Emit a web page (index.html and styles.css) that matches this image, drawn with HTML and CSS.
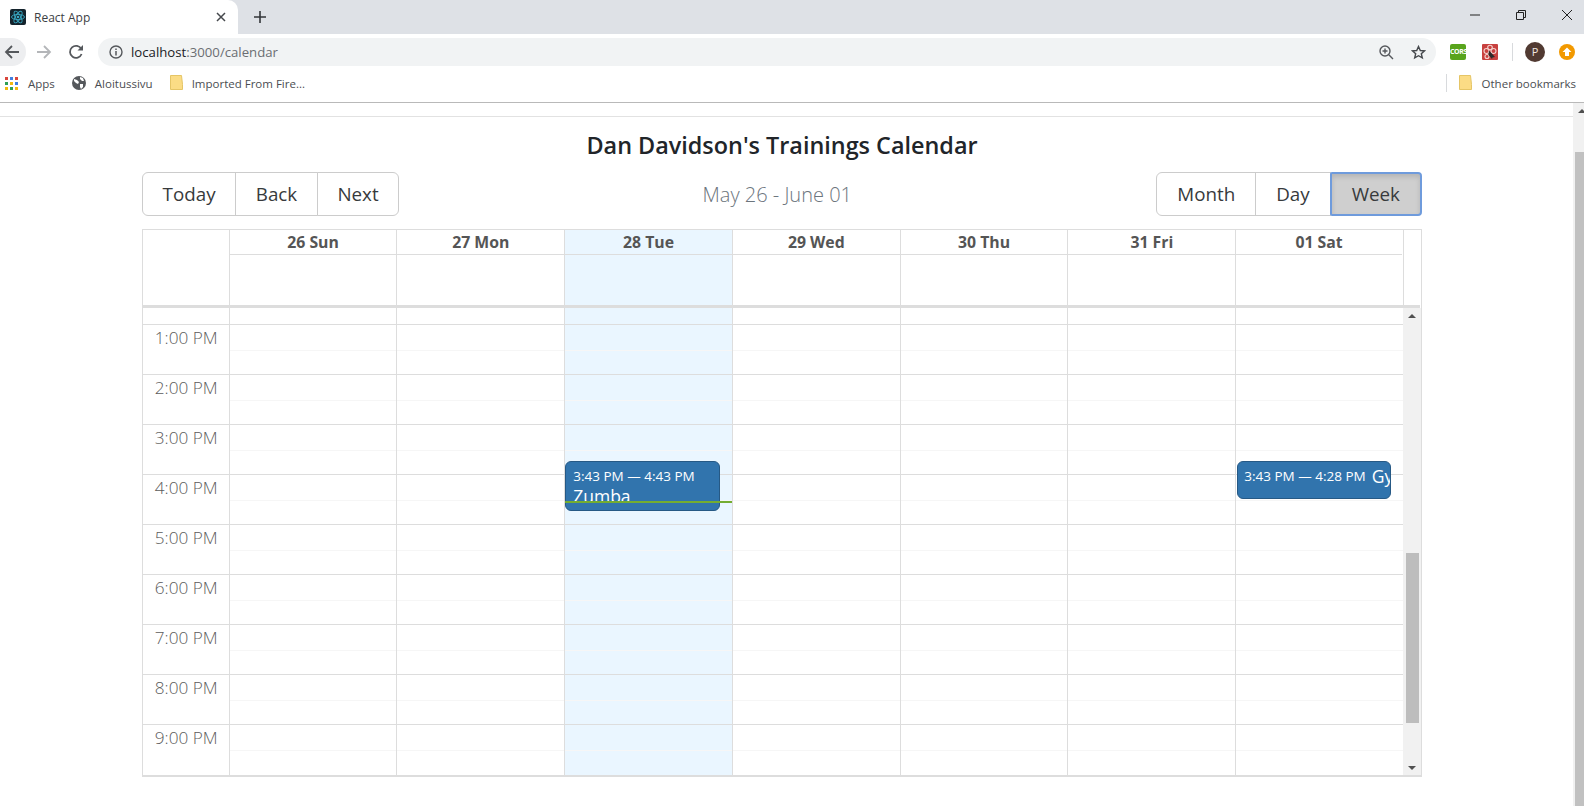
FILE: index.html
```html
<!DOCTYPE html>
<html lang="en">
<head>
    <meta charset="UTF-8">
    <title>React App</title>
    <link rel="stylesheet" href="styles.css">
</head>
<body>

<div class="tabstrip">
    <div class="tab">
        <svg class="favicon" width="16" height="16" viewBox="0 0 16 16">
            <rect width="16" height="16" rx="2" fill="#14232c"/>
            <g fill="none" stroke="#39a9c4" stroke-width="0.9">
                <ellipse cx="8" cy="8" rx="6.5" ry="2.6"/>
                <ellipse cx="8" cy="8" rx="6.5" ry="2.6" transform="rotate(60 8 8)"/>
                <ellipse cx="8" cy="8" rx="6.5" ry="2.6" transform="rotate(120 8 8)"/>
            </g>
            <circle cx="8" cy="8" r="1.3" fill="#39a9c4"/>
        </svg>
        <span class="tab-title">React App</span>
        <svg class="tab-close" width="10" height="10" viewBox="0 0 10 10">
            <path d="M1 1l8 8M9 1l-8 8" stroke="#45484c" stroke-width="1.5"/>
        </svg>
    </div>
    <svg class="new-tab" width="12" height="12" viewBox="0 0 12 12">
        <path d="M6 0v12M0 6h12" stroke="#33363a" stroke-width="1.6"/>
    </svg>
    <div class="window-btns">
        <svg width="10" height="10" viewBox="0 0 10 10"><path d="M0 5h10" stroke="#222" stroke-width="1"/></svg>
        <svg width="10" height="10" viewBox="0 0 10 10" fill="none" stroke="#222"><path d="M.5 2.5h7v7h-7zM2.5 2.5v-2h7v7h-2"/></svg>
        <svg width="10" height="10" viewBox="0 0 10 10"><path d="M0 0l10 10M10 0l-10 10" stroke="#222" stroke-width="1"/></svg>
    </div>
</div>

<div class="toolbar">
    <div class="nav-back">
        <svg width="16" height="16" viewBox="0 0 16 16" fill="none" stroke="#55585c" stroke-width="1.8"><path d="M15 8H2M8 2L2 8l6 6"/></svg>
    </div>
    <svg class="nav-fwd" width="16" height="16" viewBox="0 0 16 16" fill="none" stroke="#b4b6b9" stroke-width="1.8"><path d="M1 8h13M8 2l6 6-6 6"/></svg>
    <svg class="nav-reload" width="16" height="16" viewBox="0 0 16 16" fill="none"><path d="M13.6 10a6 6 0 1 1-.3-5" stroke="#55585c" stroke-width="1.8"/><path d="M15 1v5.500H9.500z" fill="#55585c"/></svg>
    <div class="omnibox">
        <svg width="14" height="14" viewBox="0 0 14 14" fill="none"><circle cx="7" cy="7" r="6" stroke="#55585c" stroke-width="1.4"/><path d="M7 6v4.500M7 3.500v1.400" stroke="#55585c" stroke-width="1.500"/></svg>
        <span class="url"><span class="url-host">localhost</span>:3000/calendar</span>
        <svg class="zoom-icon" width="15" height="15" viewBox="0 0 15 15" fill="none" stroke="#55585c" stroke-width="1.4"><circle cx="6" cy="6" r="5"/><path d="M9.800 9.800L14 14M3.500 6h5M6 3.500v5"/></svg>
        <svg class="star-icon" width="15" height="15" viewBox="0 0 15 15" fill="none" stroke="#45484c" stroke-width="1.400"><path d="M7.500 1.500l1.800 4 4.200.4-3.200 2.800 1 4.200-3.800-2.200-3.800 2.200 1-4.200L1.500 5.900l4.200-.4z"/></svg>
    </div>
    <div class="ext-cors">CORS</div>
    <svg class="ext-redux" width="16" height="16" viewBox="0 0 16 16">
        <rect width="16" height="16" rx="1" fill="#c8413f"/>
        <g fill="none" stroke="#f4d3cf" stroke-width="1.1"><circle cx="4.500" cy="7" r="2.500"/><circle cx="11.500" cy="7" r="2.500"/><circle cx="8" cy="3.500" r="2.300"/><circle cx="5" cy="12.500" r="2"/></g>
        <path d="M7 6.500l6 6.500-2.500.5-.5 1.500-3.500-4z" fill="#2b2b2b"/>
    </svg>
    <div class="toolbar-sep"></div>
    <div class="avatar">P</div>
    <svg class="ext-update" width="16" height="16" viewBox="0 0 16 16">
        <circle cx="8" cy="8" r="8" fill="#f29900"/>
        <path d="M8 3.500L12.500 8H10v4H6V8H3.500z" fill="#fff"/>
    </svg>
</div>

<div class="bookmarks">
    <div class="bookmark bookmark-apps">
        <svg width="13" height="13" viewBox="0 0 13 13">
            <rect x="0" y="0" width="3" height="3" fill="#d9463c"/><rect x="5" y="0" width="3" height="3" fill="#3f7fe0"/><rect x="10" y="0" width="3" height="3" fill="#d9463c"/>
            <rect x="0" y="5" width="3" height="3" fill="#2f9e55"/><rect x="5" y="5" width="3" height="3" fill="#f2b90f"/><rect x="10" y="5" width="3" height="3" fill="#3f7fe0"/>
            <rect x="0" y="10" width="3" height="3" fill="#f2b90f"/><rect x="5" y="10" width="3" height="3" fill="#2f9e55"/><rect x="10" y="10" width="3" height="3" fill="#f2b90f"/>
        </svg>
        <span>Apps</span>
    </div>
    <div class="bookmark">
        <svg width="14" height="14" viewBox="0 0 14 14">
            <circle cx="7" cy="7" r="7" fill="#55585c"/>
            <path d="M2 3l3 1 2 2-1 2-2-1-2-2zM8 1l3 1 1 3-2 0-2-2zM8 8l3 0 0 3-2 2-1-2z" fill="#fff"/>
        </svg>
        <span>Aloitussivu</span>
    </div>
    <div class="bookmark">
        <svg class="folder" width="13" height="16" viewBox="0 0 13 16"><path d="M.5.5h11l1 9v5H.5z" fill="#fbdc85" stroke="#e5c566"/></svg>
        <span>Imported From Fire...</span>
    </div>
    <div class="bookmark-sep"></div>
    <div class="bookmark">
        <svg class="folder" width="13" height="16" viewBox="0 0 13 16"><path d="M.5.5h11l1 9v5H.5z" fill="#fbdc85" stroke="#e5c566"/></svg>
        <span>Other bookmarks</span>
    </div>
</div>

<div class="page">
    <div class="page-main">
        <div class="navbar-edge"></div>
        <h1 class="cal-title">Dan Davidson's Trainings Calendar</h1>

        <div class="calendar">
            <div class="cal-toolbar">
                <div class="btn-group">
                    <button type="button">Today</button>
                    <button type="button">Back</button>
                    <button type="button">Next</button>
                </div>
                <span class="cal-label">May 26 - June 01</span>
                <div class="btn-group">
                    <button type="button">Month</button>
                    <button type="button">Day</button>
                    <button type="button" class="active">Week</button>
                </div>
            </div>

            <div class="timegrid">
                <div class="grid-head">
                    <div class="head-gutter"></div>
                    <div class="head-col"><div class="head-name">26 Sun</div><div class="allday"></div></div>
                    <div class="head-col"><div class="head-name">27 Mon</div><div class="allday"></div></div>
                    <div class="head-col today"><div class="head-name">28 Tue</div><div class="allday"></div></div>
                    <div class="head-col"><div class="head-name">29 Wed</div><div class="allday"></div></div>
                    <div class="head-col"><div class="head-name">30 Thu</div><div class="allday"></div></div>
                    <div class="head-col"><div class="head-name">31 Fri</div><div class="allday"></div></div>
                    <div class="head-col"><div class="head-name">01 Sat</div><div class="allday"></div></div>
                </div>
                <div class="grid-body">
                    <div class="time-gutter" id="gutter"></div>
                    <div class="day-col" id="d0"></div>
                    <div class="day-col" id="d1"></div>
                    <div class="day-col today" id="d2">
                        <div class="event event-zumba">
                            <div class="event-time">3:43 PM — 4:43 PM</div>
                            <div class="event-name">Zumba</div>
                        </div>
                        <div class="now-line"></div>
                    </div>
                    <div class="day-col" id="d3"></div>
                    <div class="day-col" id="d4"></div>
                    <div class="day-col" id="d5"></div>
                    <div class="day-col" id="d6">
                        <div class="event event-gym">
                            <span class="event-time">3:43 PM — 4:28 PM</span>
                            <span class="event-name">Gym</span>
                        </div>
                    </div>
                    <div class="inner-scroll">
                        <div class="arrow-up"></div>
                        <div class="inner-thumb"></div>
                        <div class="arrow-down"></div>
                    </div>
                </div>
            </div>
        </div>
    </div>
    <div class="page-scroll">
        <div class="arrow-up"></div>
        <div class="page-thumb"></div>
    </div>
</div>

<script>
    // slots are the same in every column, so build them here
    const hours = ['1:00 PM', '2:00 PM', '3:00 PM', '4:00 PM', '5:00 PM', '6:00 PM', '7:00 PM', '8:00 PM', '9:00 PM'];

    function addSlots(col, withLabel) {
        const frag = document.createDocumentFragment();
        const first = document.createElement('div');
        first.className = 'slot-partial';
        frag.appendChild(first);
        hours.forEach(h => {
            const slot = document.createElement('div');
            slot.className = withLabel ? 'slot slot-label' : 'slot';
            if (withLabel) slot.textContent = h;
            else slot.appendChild(document.createElement('div')).className = 'half';
            frag.appendChild(slot);
        });
        col.insertBefore(frag, col.firstChild);
    }

    addSlots(document.getElementById('gutter'), true);
    for (let i = 0; i < 7; i++) addSlots(document.getElementById('d' + i), false);
</script>

</body>
</html>
```

FILE: styles.css
```css
* {
    box-sizing: border-box;
}
html, body {
    height: 100%;
}
body {
    margin: 0;
    font-family: "Open Sans", "Noto Sans", Arial, sans-serif;
    color: #212529;
    background-color: #fff;
    overflow: hidden;
    display: flex;
    flex-direction: column;
}

/* browser chrome */
.tabstrip {
    height: 34px;
    background-color: #dee1e6;
    display: flex;
    align-items: center;
    flex: none;
}
.tab {
    width: 238px;
    height: 34px;
    background-color: #fff;
    border-radius: 0 10px 0 0;
    display: flex;
    align-items: center;
    padding-left: 10px;
}
.tab-title {
    font-size: 12px;
    color: #3c4043;
    margin-left: 8px;
    flex: 1;
}
.tab-close {
    margin-right: 12px;
}
.new-tab {
    margin-left: 16px;
}
.window-btns {
    margin-left: auto;
    width: 114px;
    display: flex;
    justify-content: space-between;
    padding-right: 12px;
    margin-top: -5px;
}
.toolbar {
    height: 32px;
    padding-top: 4px;
    flex: none;
    display: flex;
    align-items: center;
    background-color: #fff;
}
.nav-back {
    width: 28px;
    height: 28px;
    margin-left: -2px;
    border-radius: 0 14px 14px 0;
    background-color: #edeef0;
    display: flex;
    align-items: center;
    justify-content: center;
}
.nav-fwd {
    margin-left: 10px;
}
.nav-reload {
    margin-left: 16px;
}
.omnibox {
    margin-left: 14px;
    width: 1338px;
    height: 28px;
    background-color: #f1f3f4;
    border-radius: 14px;
    display: flex;
    align-items: center;
    padding-left: 11px;
}
.url {
    font-size: 13.200px;
    margin-left: 8px;
    color: #6b6e72;
    flex: 1;
}
.url-host {
    color: #202124;
}
.star-icon {
    margin-left: 17px;
    margin-right: 10px;
}
.ext-cors {
    width: 16px;
    height: 16px;
    margin-left: 14px;
    background-color: #58a41c;
    border-radius: 2px;
    color: #fff;
    font-size: 7px;
    font-weight: 700;
    letter-spacing: -0.4px;
    line-height: 16px;
    text-align: center;
}
.ext-redux {
    margin-left: 16px;
}
.toolbar-sep {
    width: 1px;
    height: 18px;
    background-color: #d8dadd;
    margin-left: 14px;
}
.avatar {
    width: 20px;
    height: 20px;
    margin-left: 12px;
    border-radius: 50%;
    background-color: #513a32;
    color: #f2e6e0;
    font-size: 11px;
    line-height: 20px;
    text-align: center;
}
.ext-update {
    margin-left: 14px;
}
.bookmarks {
    height: 37px;
    flex: none;
    display: flex;
    align-items: center;
    padding-left: 5px;
    padding-right: 8px;
    padding-bottom: 2px;
    background-color: #fff;
    border-bottom: 1px solid #b9b9b9;
    font-size: 11.500px;
    color: #4a4d51;
}
.bookmark {
    display: flex;
    align-items: center;
    gap: 9px;
    margin-right: 17px;
}
.bookmark-apps {
    gap: 10px;
}
.bookmark:last-child {
    margin-right: 0;
    gap: 10px;
}
.bookmark-sep {
    width: 1px;
    height: 18px;
    background-color: #d8dadd;
    margin-left: auto;
    margin-right: 12px;
}

/* page */
.page {
    flex: 1;
    min-height: 0;
    display: flex;
}
.page-main {
    flex: 1;
    min-width: 0;
}
.navbar-edge {
    height: 14px;
    border-bottom: 1px solid #e2e2e2;
}
.cal-title {
    margin: 12px 0 0;
    padding-right: 9px;
    font-size: 23.400px;
    line-height: 32px;
    font-weight: 600;
    text-align: center;
    color: #212529;
}
.page-scroll {
    width: 11px;
    background-color: #f1f1f1;
    display: flex;
    flex-direction: column;
    align-items: center;
    padding-top: 6px;
}
.page-scroll .arrow-up {
    margin-left: 6px;
}
.page-thumb {
    margin-top: 39px;
    flex: 1;
    width: 9px;
    margin-left: 2px;
    background-color: #c1c1c1;
}

/* calendar */
.calendar {
    margin: 11px 0 0 142px;
    width: 1280px;
}
.cal-toolbar {
    display: flex;
    align-items: center;
    justify-content: space-between;
    height: 44px;
    margin-bottom: 13px;
}
.cal-label {
    font-size: 20px;
    color: #6c757d;
    margin-left: -1px;
    font-weight: 300;
}
.btn-group {
    display: flex;
    height: 44px;
}
.btn-group button {
    font-family: inherit;
    font-size: 18.800px;
    color: #373a3c;
    font-weight: 400;
    background-color: #fff;
    border: 1px solid #ccc;
    margin-left: -1px;
    padding: 0 20px;
    height: 44px;
}
.btn-group:first-child button {
    padding: 0 19.600px;
}
.btn-group button:first-child {
    margin-left: 0;
    border-radius: 6px 0 0 6px;
}
.btn-group button:last-child {
    border-radius: 0 6px 6px 0;
}
.btn-group button.active {
    background-color: #cfcfcf;
    border: 2px solid #6f9bdc;
    box-shadow: inset 0 3px 5px rgba(0, 0, 0, 0.125);
    border-radius: 2px 4px 4px 2px;
}
.timegrid {
    border: 1px solid #ddd;
    border-bottom-width: 2px;
    height: 548px;
    display: flex;
    flex-direction: column;
    overflow: hidden;
}
.grid-head {
    height: 78px;
    flex: none;
    display: flex;
    border-bottom: 3px solid #ddd;
    margin-right: 1px;
}
.head-gutter {
    width: 85.700px;
    flex: none;
}
.head-col {
    width: 167.760px;
    flex: none;
    border-left: 1px solid #ddd;
}
.head-col:nth-child(8) {
    width: 168.760px;
    padding-right: 1px;
    border-right: 1px solid #ddd;
}
.head-name {
    height: 25px;
    line-height: 24px;
    border-bottom: 1px solid #ddd;
    text-align: center;
    font-size: 15.800px;
    font-weight: 700;
    color: #555;
}
.today {
    background-color: #eaf6ff;
}
.grid-body {
    flex: 1;
    min-height: 0;
    display: flex;
    overflow: hidden;
}
.time-gutter {
    width: 85.700px;
    flex: none;
}
.day-col {
    width: 167.760px;
    flex: none;
    position: relative;
    border-left: 1px solid #ddd;
}
.slot-partial {
    height: 16px;
}
.slot {
    height: 50px;
    border-top: 1px solid #ddd;
}
.half {
    height: 26px;
    border-bottom: 1px solid #f6f6f6;
}
.slot-label {
    font-size: 17.200px;
    font-weight: 300;
    color: #5c5c5c;
    text-align: right;
    padding-right: 11px;
    line-height: 26px;
}
.event {
    position: absolute;
    background-color: #3174ad;
    border: 1px solid #265985;
    border-radius: 6px;
    color: #fff;
    top: 153px;
    padding: 4px 7px 0;
    overflow: hidden;
    line-height: 20px;
}
.event-time {
    font-size: 13.500px;
}
.event-name {
    font-size: 17.500px;
}
.event-gym {
    display: flex;
    gap: 6px;
    white-space: nowrap;
    left: 1px;
    width: 154px;
    height: 38px;
    padding-left: 6px;
}
.event-zumba {
    left: 0;
    width: 155px;
    height: 50px;
}
.now-line {
    position: absolute;
    left: 0;
    right: 0;
    top: 193px;
    height: 2px;
    background-color: #74ad31;
}
.inner-scroll {
    width: 18px;
    flex: none;
    background-color: #f1f1f1;
    display: flex;
    flex-direction: column;
    align-items: center;
    padding-top: 6px;
}
.inner-thumb {
    width: 13px;
    height: 170px;
    margin-top: 235px;
    margin-left: 1px;
    background-color: #bdbdbd;
}
.arrow-up, .arrow-down {
    width: 0;
    height: 0;
    border-left: 4px solid transparent;
    border-right: 4px solid transparent;
}
.arrow-up {
    border-bottom: 4px solid #505050;
}
.arrow-down {
    border-top: 4px solid #505050;
    margin-top: 43px;
}
```
